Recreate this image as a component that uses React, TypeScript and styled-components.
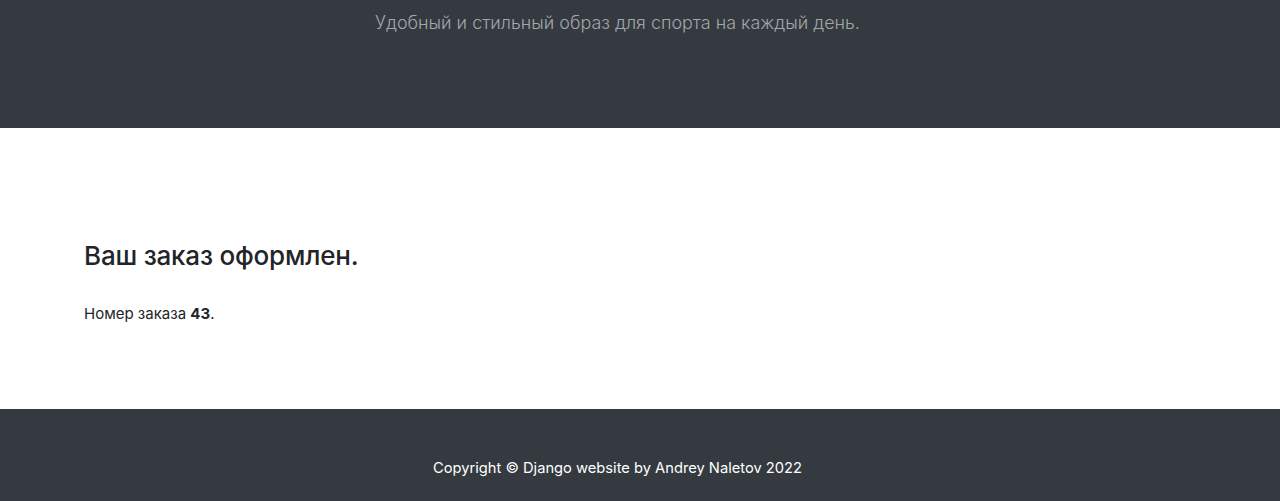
import styled, { createGlobalStyle } from 'styled-components'

const GlobalStyle = createGlobalStyle`
  html, body {
    margin: 0;
    padding: 0;
    background: #fff;
    font-family: Inter, 'Noto Sans', 'Liberation Sans', sans-serif;
    color: #212529;
  }
`

const Page = styled.div`
  min-height: 501px;
  display: grid;
  grid-template-rows: 128px 1fr 92px;
`

// centred blocks sit a little left of the middle in the shot
const Hero = styled.header`
  background: #343a40;
  display: flex;
  justify-content: center;
  align-items: flex-start;
  padding: 8px 45px 0 0;
`

const Lead = styled.p`
  margin: 0;
  font-size: 17.95px;
  font-weight: 300;
  line-height: 30px;
  color: #a3a6ab;
`

const Main = styled.main`
  width: 1112px;
  margin: 0 auto;
  padding-top: 111px;
`

const Title = styled.h3`
  margin: 0 0 29px;
  font-size: 26px;
  font-weight: 500;
  line-height: 34px;
  letter-spacing: -0.2px;
`

const OrderNumber = styled.p`
  margin: 0;
  font-size: 15px;
  line-height: 24px;

  b {
    font-weight: 700;
  }
`

const Footer = styled.footer`
  background: #343a40;
  display: flex;
  justify-content: center;
  padding: 47px 45px 0 0;
`

const FooterText = styled.p`
  margin: 0;
  color: #fff;
  font-size: 14.7px;
  line-height: 24px;
`

export default function App() {
  return (
    <>
      <GlobalStyle />
      <Page>
        <Hero>
          <Lead>Удобный и стильный образ для спорта на каждый день.</Lead>
        </Hero>

        <Main>
          <Title>Ваш заказ оформлен.</Title>
          <OrderNumber>
            Номер заказа <b>43</b>.
          </OrderNumber>
        </Main>

        <Footer>
          <FooterText>Copyright © Django website by Andrey Naletov 2022</FooterText>
        </Footer>
      </Page>
    </>
  )
}
